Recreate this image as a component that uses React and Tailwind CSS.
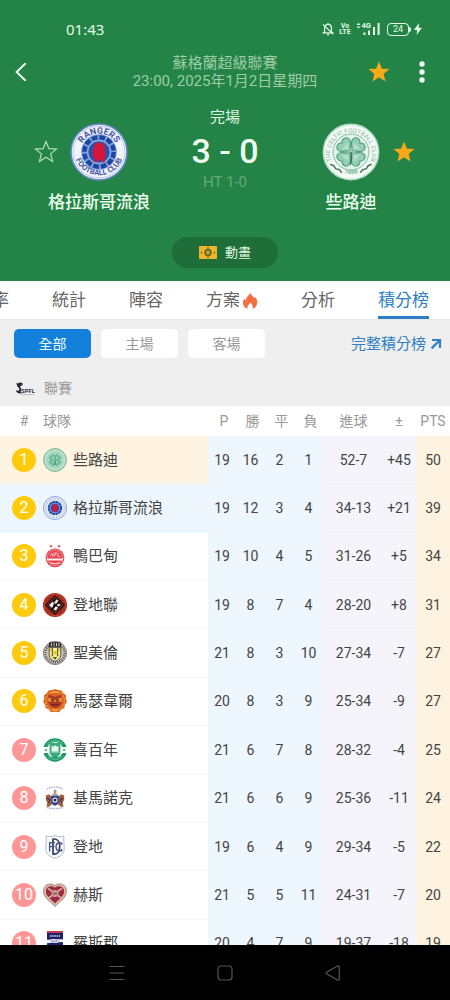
import React from "react";

const STAR =
  "M12 1.6l2.9 7.1 7.5.4-5.8 4.8 2 7.5L12 17.3l-6.6 4.1 2-7.5L1.6 9.1l7.5-.4z";

function Star({ filled }) {
  return (
    <svg viewBox="0 0 24 24" className="size-6" aria-hidden="true">
      <path
        d={STAR}
        fill={filled ? "#fca918" : "none"}
        stroke={filled ? "none" : "#b9dfb9"}
        strokeWidth="1.2"
      />
    </svg>
  );
}

function Rangers({ detailed, className }) {
  return (
    <svg viewBox="0 0 60 60" className={className} aria-hidden="true">
      <circle cx="30" cy="30" r="29" fill="#f0f3fa" stroke="#5f83bf" strokeWidth="1.6" />
      <circle cx="30" cy="30" r="26.8" fill="none" stroke="#a9bbe0" strokeWidth=".8" />
      {detailed ? (
        <>
          <path id="rfc-top" d="M10 31a20 20 0 0 1 40 0" fill="none" />
          <path id="rfc-bottom" d="M4 28a26 26 0 0 0 52 0" fill="none" />
          <text fill="#4a58a8" fontSize="9.2" fontWeight="700" fontFamily="Roboto, sans-serif" textAnchor="middle">
            <textPath href="#rfc-top" startOffset="50%">RANGERS</textPath>
          </text>
          <text fill="#4a58a8" fontSize="8" fontWeight="700" fontFamily="Roboto, sans-serif" textAnchor="middle">
            <textPath href="#rfc-bottom" startOffset="50%">FOOTBALL CLUB</textPath>
          </text>
        </>
      ) : (
        <circle cx="30" cy="30" r="23" fill="none" stroke="#a9b6df" strokeWidth="4" strokeDasharray="3 3" />
      )}
      <circle cx="30" cy="30" r="18.4" fill="#7c9dd8" />
      <circle cx="30" cy="30" r="15.2" fill="none" stroke="#1c45a0" strokeWidth="4.6" strokeDasharray="5.9 2.05" />
      <circle cx="30" cy="30" r="11.6" fill="#1f54b4" stroke="#a9c2ea" strokeWidth=".9" />
      <path
        d="M27 21l2-1.6 1.6 1.8 2.6-1 2.2 2-1 2.4 2.8-.6-.6 3.4-2 .8 3 1.4-1.2 3.4 1 3-2.2 1.6 1 2.4-3.4.8-1.2-3-2.4 1-1.2 1.8-3.4-.8 1.4-2.4-2.8-1 1.4-2-3-1.2 2.8-2-2.8-2 3-.8-1.800-2.800 3.200.4-1.600-2.800z"
        fill="#d5163c"
      />
    </svg>
  );
}

const LEAF =
  "M0-1.4C-2.2-4.6-8-6-8-10.8c0-4.4 5.6-5.8 8-2.2 2.4-3.6 8-2.2 8 2.2C8-6 2.2-4.6 0-1.4z";

function Celtic({ detailed, className }) {
  const leaf = detailed ? "#94ceb3" : "#6cc098";
  return (
    <svg viewBox="0 0 60 60" className={className} aria-hidden="true">
      <circle cx="30" cy="30" r="28.6" fill={detailed ? "#f3faf6" : "#a9d9c1"} stroke={detailed ? "#b6dcc8" : "#4a9f77"} strokeWidth="1.6" />
      {detailed ? (
        <>
          <path id="cfc-top" d="M9.400 38a21.600 21.600 0 1 1 41.200 0" fill="none" />
          <path id="cfc-bottom" d="M10 43a25.300 25.300 0 0 0 40 0" fill="none" />
          <text fill="#9cc5ae" fontSize="6.400" fontWeight="500" fontFamily="Roboto, sans-serif" textAnchor="middle">
            <textPath href="#cfc-top" startOffset="50%">THE CELTIC FOOTBALL CLUB</textPath>
          </text>
          <text fill="#7fb396" fontSize="6.400" fontWeight="700" fontFamily="Roboto, sans-serif" textAnchor="middle">
            <textPath href="#cfc-bottom" startOffset="50%">1888</textPath>
          </text>
          <path d="M8.600 42.600l3.600 1.600 1.800 3 4 1.200 2.400 3M51.400 42.600l-3.600 1.600-1.800 3-4 1.200-2.400 3" fill="none" stroke="#4b7a64" strokeWidth="1.600" />
        </>
      ) : (
        <circle cx="30" cy="30" r="23.500" fill="none" stroke="#d3ecdf" strokeWidth="4" strokeDasharray="2.600 2.600" />
      )}
      <circle cx="30" cy="30" r="18.600" fill={detailed ? "#e0f2e9" : "#b9e2cf"} stroke="#7dbc9e" strokeWidth="1" />
      {[45, 135, 225, 315].map((a) => (
        <g key={a} transform={"translate(30 30) rotate(" + a + ")"}>
          <path d={LEAF} fill={leaf} stroke="#4f9c7a" strokeWidth="1" />
          <path d="M0-3v-7M0-6l-3.600-3M0-6l3.600-3" fill="none" stroke="#d8efe3" strokeWidth=".9" />
        </g>
      ))}
      <path d="M30 30q1 7-.6 13" fill="none" stroke="#2f7555" strokeWidth="1.500" />
    </svg>
  );
}

function Crest({ children }) {
  return (
    <svg viewBox="0 0 24 24" className="size-6" aria-hidden="true">
      {children}
    </svg>
  );
}

const Aberdeen = () => (
  <Crest>
    <path d="M8 .4l.6 1.1 1.2.1-.9.9.2 1.2L8 3.1l-1.1.6.2-1.2-.9-.9 1.2-.1zM16 .4l.6 1.1 1.2.1-.9.9.2 1.2-1.1-.6-1.1.6.2-1.2-.9-.9 1.2-.1z" fill="#e4545c" />
    <circle cx="12" cy="13.8" r="9.4" fill="#e5404b" />
    <circle cx="12" cy="13.8" r="7.8" fill="none" stroke="#f5a3a7" strokeWidth=".8" />
    <path d="M7 12.500l2-3.500 1 3.500M11.200 12.500V9h3M11.200 10.800h2.400M17.500 12.500h-2.400V9" fill="none" stroke="#fbc9cb" strokeWidth=".9" />
    <path d="M3.600 14.400h16.800l-.6 2H4.200z" fill="#fdeeee" />
    <path d="M7.400 18.400c2.400 1.600 6.800 1.600 9.200 0" fill="none" stroke="#fbc9cb" strokeWidth="1.200" />
  </Crest>
);

const DundeeUnited = () => (
  <Crest>
    <circle cx="12" cy="12" r="12" fill="#a52b1c" />
    <circle cx="12" cy="12" r="10.800" fill="none" stroke="#c9422a" strokeWidth=".9" />
    <path d="M12 2l10 10-10 10L2 12z" fill="#1c1110" />
    <path d="M12 4.200L19.800 12 12 19.800 4.200 12z" fill="#241615" stroke="#a9402c" strokeWidth=".8" />
    <path d="M6 12l4-3.600 1 2.400L9 15zM13.400 6.600l2 1.200-1 2.400 3.600 1.800-2.800 1.400-2-2.200-2-1.400zM12.600 13l2.400 1.600-2 3-2.600-1z" fill="#f6efe9" />
    <path d="M8 17.600L17.400 7" stroke="#120c0c" strokeWidth="1.400" />
  </Crest>
);

const StMirren = () => (
  <Crest>
    <circle cx="12" cy="12" r="11.600" fill="#c9c7c2" stroke="#6d6b66" strokeWidth=".8" />
    <circle cx="12" cy="12" r="9.600" fill="none" stroke="#6a6862" strokeWidth="2.400" strokeDasharray="1.300 1" />
    <path d="M6.400 1.200h11.200l.8 4.600H5.600z" fill="#27241f" />
    <path d="M8.400 2v3M11 2v3M13.600 2v3M16 2v3" stroke="#dcdad4" strokeWidth="1" />
    <path d="M6.200 6.400h11.600v8c0 3-3 5-5.800 6-2.800-1-5.800-3-5.800-6z" fill="#f5ecb0" stroke="#37342b" strokeWidth=".8" />
    <path d="M7 7.200h3v3H7zM14 7.200h3v3h-3zM10.200 10h3.600v3.400h-3.600zM7.400 13.400h2.800v2.800H8.400zM13.800 13.400h2.800l-1 2.800h-1.800z" fill="#e5cb1d" />
    <path d="M9.400 7v8M14.600 7v8" stroke="#4b473c" strokeWidth=".9" />
    <path d="M9.800 16.200h4.400l-2.200 2.400z" fill="#312e28" />
  </Crest>
);

const Motherwell = () => (
  <Crest>
    <path d="M12 0l3 1 3.400.4 1.800 2.800 2.800 2-.2 3.400 1.200 3.200-2 2.800-.6 3.400-3.200 1.400L16 23.200l-4-.4-4 .4-2.200-2.800-3.200-1.400L2 15.600l-2-2.800 1.200-3.200L1 6.200l2.800-2L5.600 1.400 9 1z" fill="#dd6422" />
    <circle cx="12" cy="12" r="9.600" fill="none" stroke="#ee9a38" strokeWidth="1.200" strokeDasharray="2 1" />
    <path d="M5.400 5.600L12 8l6.600-2.400v7.400c0 3-3.400 5.400-6.600 6-3.200-.6-6.600-3-6.600-6z" fill="#a8382a" />
    <path d="M5.400 8.600L12 11l6.600-2.400v4H5.400z" fill="#f2a62c" />
    <path d="M8 10.200l1.600 2 1.400-2M16 10.200l-1.600 2-1.400-2M8 15.600h8" stroke="#7d1f22" strokeWidth="1.200" fill="none" />
    <path d="M8.400 3.400h7.200M9 20.800h6" stroke="#f3b24a" strokeWidth="1" />
  </Crest>
);

const Hibernian = () => (
  <Crest>
    <circle cx="12" cy="12" r="11.800" fill="#1e9b6a" />
    <path d="M0 9h24v6H0z" fill="#fff" />
    <circle cx="12" cy="12" r="8" fill="#f4fbf8" />
    <path d="M6.600 5h10.800v9.400c0 2.600-3 4.400-5.400 5.200-2.400-.8-5.400-2.600-5.400-5.200z" fill="#3aa97d" />
    <path d="M9 13V8l1.400 1.200L12 7.400l1.600 1.800L15 8v5zM7.600 14h8.800" fill="#e9f7f0" stroke="#e9f7f0" strokeWidth=".8" />
    <path d="M9 20.400c0-2 6-2 6 0M1.800 12h2M20.200 12h2" stroke="#1e9b6a" strokeWidth="1.500" fill="none" />
    <path d="M4.400 6.200a10 10 0 0 1 15.200 0M4.600 18a10 10 0 0 0 14.800 0" fill="none" stroke="#a5dcc5" strokeWidth=".9" strokeDasharray="1.400 .8" />
  </Crest>
);

const Kilmarnock = () => (
  <Crest>
    <path d="M4 3.200C8 .4 16 .4 20 3.200" fill="none" stroke="#a3b4cc" strokeWidth="1.300" strokeDasharray="1.600 .7" />
    <path d="M10.600 4.400l1.400-1.200 1.600 1.200-.4 3 2 1.600H8.800l2-1.600z" fill="#b9978b" />
    <path d="M2.800 9.400l3-1.200 3 2.600v8l-3 2H3.400l1-4-1.600-3zM21.200 9.400l-3-1.200-3 2.600v8l3 2h2.400l-1-4 1.600-3z" fill="#a2603f" />
    <path d="M4 12l3 2-2 3M20 12l-3 2 2 3" stroke="#4c3346" strokeWidth="1.100" fill="none" />
    <path d="M8.200 9.600h7.600v6.200c0 2.200-2 3.400-3.800 4-1.800-.6-3.800-1.800-3.800-4z" fill="#27438f" />
    <circle cx="12" cy="14" r="2.600" fill="#f5f5f5" />
    <path d="M10.800 12.800h2.400l.4 1.800L12 15.800l-1.600-1.200z" fill="#20233a" />
    <path d="M4 21.200c4 1.800 12 1.800 16 0" fill="none" stroke="#a3b4cc" strokeWidth="1.500" strokeDasharray="1.600 .7" />
  </Crest>
);

const Dundee = () => (
  <Crest>
    <path d="M3 1c3 1 6 .8 9-.4 3 1.200 6 1.400 9 .4-.8 4 .4 9 .2 13.600C21 19.400 16.600 22 12 23.200 7.400 22 3 19.400 2.800 14.600 2.600 10 3.800 5 3 1z" fill="#f8f9fc" stroke="#a7b1c8" strokeWidth=".9" />
    <path d="M10 3.400v16.400M10 4h1.600c6.800 0 6.800 15.200 0 15.200H10" fill="none" stroke="#2f3c66" strokeWidth="1.700" />
    <path d="M6.600 7.400v9.200M6 7.600h6M6.600 11.600h5M18.600 9.200c-1.200-2.600-5.600-2-5.600 2.600s4.400 5.200 5.600 2.600M18.600 7.400v2.400M18.600 14v2.400" fill="none" stroke="#46537e" strokeWidth="1.300" />
  </Crest>
);

const Hearts = () => (
  <Crest>
    <path d="M12 2.600C9.600.4 4.600.2 2 3.400-.6 6.800.4 12 3.600 15.600 6 18.400 9.400 20.400 12 23.400c2.600-3 6-5 8.400-7.800C23.600 12 24.600 6.800 22 3.400 19.400.2 14.400.4 12 2.600z" fill="#d9b7a0" stroke="#8d6a63" strokeWidth=".7" />
    <path d="M12 4.800C9.600 2.800 6 2.800 4 5c-2 2.600-1 6.400 1.400 9.200C7.400 16.400 10 18 12 20.400c2-2.400 4.600-4 6.600-6.200C21 11.400 22 7.600 20 5c-2-2.200-5.600-2.200-8-.2z" fill="#9c2a44" />
    <path d="M5 5.400l14 10M19 5.400l-14 10" stroke="#ddbcae" strokeWidth="1.500" />
    <circle cx="12" cy="10.500" r="3.500" fill="#cda08b" />
    <path d="M10 9.400l4 2.400M14 9.400l-4 2.400" stroke="#73506a" strokeWidth=".9" />
  </Crest>
);

const RossCounty = () => (
  <Crest>
    <path d="M4 0h16v14c0 5-4 8-8 10-4-2-8-5-8-10z" fill="#1f2366" />
    <path d="M4 0h16v2H4z" fill="#c33a56" />
    <path d="M7 5h10" stroke="#aab0db" strokeWidth="1.800" strokeDasharray="1.400 .8" />
    <path d="M4 8.400c3 .8 5-.8 8-.2 3 .4 5-.4 8 .2v3c-4-1-5 1-8 .6-3-.6-5-.4-8 .2z" fill="#eceef8" />
    <path d="M8 9.200l1.400 1.600L11 9.400l1.400 1.400L14 9.400l1.400 1.400" stroke="#5a5f9b" strokeWidth=".9" fill="none" />
    <path d="M4.400 17h15.200l-2 3H6.400z" fill="#c33a56" />
  </Crest>
);

const TEAMS = [
  ["些路迪", () => <Celtic className="size-6" />, 19, 16, 2, 1, "52-7", "+45", 50],
  ["格拉斯哥流浪", () => <Rangers className="size-6" />, 19, 12, 3, 4, "34-13", "+21", 39],
  ["鴨巴甸", Aberdeen, 19, 10, 4, 5, "31-26", "+5", 34],
  ["登地聯", DundeeUnited, 19, 8, 7, 4, "28-20", "+8", 31],
  ["聖美倫", StMirren, 21, 8, 3, 10, "27-34", "-7", 27],
  ["馬瑟韋爾", Motherwell, 20, 8, 3, 9, "25-34", "-9", 27],
  ["喜百年", Hibernian, 21, 6, 7, 8, "28-32", "-4", 25],
  ["基馬諾克", Kilmarnock, 21, 6, 6, 9, "25-36", "-11", 24],
  ["登地", Dundee, 19, 6, 4, 9, "29-34", "-5", 22],
  ["赫斯", Hearts, 21, 5, 5, 11, "24-31", "-7", 20],
  ["羅斯郡", RossCounty, 20, 4, 7, 9, "19-37", "-18", 19],
];

function StatusBar() {
  return (
    <div className="flex h-6 items-center justify-between pr-7 pl-[66px] text-[#e3fbe3]">
      <span className="font-['Noto_Sans',sans-serif] text-[15px] leading-6">01:43</span>
      <div className="flex items-center gap-[6px]">
        <svg viewBox="0 0 12 14" className="h-[14px] w-3" fill="none" stroke="currentColor" strokeWidth="1.200" aria-hidden="true">
          <path d="M2.600 9.800V6c0-2.200 1.400-3.600 3.400-3.600S9.400 3.800 9.400 6v3.800l1.200 1H1.400z" />
          <path d="M6 1v1.400M5 12.600h2M1 2.400l10 9.600" />
        </svg>
        <div className="flex w-[10px] flex-col items-center font-[Roboto,sans-serif] text-[7px] leading-[6px] font-bold">
          <span>Vo</span>
          <span>LTE</span>
        </div>
        <svg viewBox="0 0 25 14" className="h-[14px] w-[25px]" fill="currentColor" aria-hidden="true">
          <path d="M2.500.8l2 2.200h-4zM2.500 6.600l-2-2.200h4z" />
          <text x="5.500" y="6.400" fontSize="7.500" fontWeight="700" fontFamily="Roboto, sans-serif">4G</text>
          <path d="M7.400 10.600h2V13h-2zM12 8.600h2V13h-2zM17 5h2v8h-2zM21.600 1h2v12h-2z" />
        </svg>
        <div className="flex items-center gap-[3px]">
          <span className="flex items-center">
            <span className="flex h-[13px] w-[22px] items-center justify-center rounded-[4px] border border-current font-[Roboto,sans-serif] text-[9px] leading-none">24</span>
            <span className="h-[5px] w-[2px] rounded-r-sm bg-current" />
          </span>
          <svg viewBox="0 0 8 12" className="h-3 w-2" fill="currentColor" aria-hidden="true">
            <path d="M5 0L0 7h3.200L2.600 12 8 4.800H4.600z" />
          </svg>
        </div>
      </div>
    </div>
  );
}

function Side({ name, favourite, children }) {
  const star = (
    <button type="button" aria-label={"收藏 " + name} className="w-6">
      <Star filled={favourite} />
    </button>
  );
  const spacer = <span className="w-6" />;
  return (
    <div className="flex w-[132px] flex-col items-center gap-[9px] pt-4">
      <div className="flex items-center gap-3">
        {favourite ? spacer : star}
        {children}
        {favourite ? star : spacer}
      </div>
      <p className="text-[17px] leading-6 font-medium whitespace-nowrap text-[#ecffec]">{name}</p>
    </div>
  );
}

function MatchHeader() {
  return (
    <header className="shrink-0 bg-[#248448] pt-[17px] pb-[13px]">
      <StatusBar />
      <div className="mt-[13px] flex h-9 items-center justify-between">
        <button type="button" aria-label="返回" className="flex w-[90px] pl-[14px]">
          <svg viewBox="0 0 14 20" className="h-5 w-[14px]" fill="none" stroke="#e9ffe9" strokeWidth="2" aria-hidden="true">
            <path d="M11.600 1.200L2.600 10l9 8.800" />
          </svg>
        </button>
        <div className="text-center text-[15px] leading-[18px] whitespace-nowrap text-[#9dcca6]">
          <h1>蘇格蘭超級聯賽</h1>
          <p>23:00, 2025年1月2日星期四</p>
        </div>
        <div className="flex w-[90px] items-center justify-end gap-[23px] pr-5">
          <button type="button" aria-label="收藏賽事">
            <Star filled />
          </button>
          <button type="button" aria-label="更多">
            <svg viewBox="0 0 16 24" className="h-6 w-4" fill="#f1fff1" aria-hidden="true">
              <circle cx="8" cy="4" r="2.700" />
              <circle cx="8" cy="12" r="2.700" />
              <circle cx="8" cy="20" r="2.700" />
            </svg>
          </button>
        </div>
      </div>

      <div className="mt-[17px] flex justify-between px-[33px]">
        <Side name="格拉斯哥流浪">
          <Rangers detailed className="size-[58px]" />
        </Side>
        <div className="flex flex-col items-center whitespace-nowrap">
          <p className="text-[15px] leading-5 text-[#e2f7e2]">完場</p>
          <p className="mt-[6px] text-[34px] leading-9 font-medium text-[#f1fff1]">3 - 0</p>
          <p className="mt-1 text-[15px] leading-[18px] text-[#64a979]">HT 1-0</p>
        </div>
        <Side name="些路迪" favourite>
          <Celtic detailed className="size-[58px]" />
        </Side>
      </div>

      <div className="mt-[23px] flex justify-center">
        <button type="button" className="flex h-[31px] w-[106px] items-center justify-center gap-2 rounded-full bg-[#1f6e39] text-[13px] text-[#e2f7e2]">
          <svg viewBox="0 0 18 13" className="h-[13px] w-[18px]" aria-hidden="true">
            <rect width="18" height="13" rx="1" fill="#f3b32b" />
            <path d="M9 .6v11.800" stroke="#4c6a22" strokeWidth="1" />
            <circle cx="9" cy="6.500" r="3" fill="#c99a2a" stroke="#4c6a22" strokeWidth="1.500" />
            <path d="M2 5l1.400 1.500L2 8zM16 5l-1.400 1.500L16 8z" fill="#4c6a22" />
          </svg>
          動畫
        </button>
      </div>
    </header>
  );
}

function Flame() {
  return (
    <svg viewBox="0 0 16 18" className="h-[18px] w-4" aria-hidden="true">
      <path d="M8.400.8c.6 2.800 3 3.600 4 5.600.4-.6.4-1.400.2-2 2.400 2 3.200 5 2.400 7.800-.8 2.600-2.600 4.200-4.800 4.600 1.200-2.200.2-4.400-2.200-6.400-.2 1.600-2.600 2.800-2.600 4.600 0 .8.200 1.400.4 1.800C2.800 16 .8 13.800 1 10.800 1 8.800 2 7.400 2.800 6.400c.2 1 .6 1.600 1.200 2C4.200 5 6.800 3.600 8.400.8z" fill="#f46e42" />
    </svg>
  );
}

const TABS = ["賠率", "統計", "陣容", "方案", "分析", "積分榜"];

function Tabs() {
  return (
    <nav className="flex h-[39px] shrink-0 justify-end gap-[43px] overflow-hidden border-b border-[#e8e8e8] bg-white pr-[21px]">
      {TABS.map((t) => (
        <a
          key={t}
          href="#"
          aria-current={t === "積分榜" ? "page" : undefined}
          className={
            "flex shrink-0 items-center gap-[2px] border-b-[3px] pt-[5px] text-[17px] whitespace-nowrap " +
            (t === "積分榜" ? "border-b-[#2c7fc4] text-[#2c7fc4]" : "border-b-transparent text-[#666]")
          }
        >
          {t}
          {t === "方案" && <Flame />}
        </a>
      ))}
    </nav>
  );
}

function Filters() {
  return (
    <div className="flex items-center justify-between pt-[9px] pr-2 pl-[14px]">
      <div className="flex gap-[10px]">
        {["全部", "主場", "客場"].map((f, i) => (
          <button
            key={f}
            type="button"
            className={
              "h-[29px] w-[77px] rounded-[5px] pt-px text-[14px] " +
              (i === 0 ? "bg-[#1380dc] text-[#eaffff]" : "bg-white text-[#999]")
            }
          >
            {f}
          </button>
        ))}
      </div>
      <a href="#" className="flex items-center gap-1 pt-px text-[15px] whitespace-nowrap text-[#3181c4]">
        完整積分榜
        <svg viewBox="0 0 12 12" className="size-3" fill="none" stroke="currentColor" strokeWidth="2.200" aria-hidden="true">
          <path d="M2 2h8v8M10 2L1.600 10.400" />
        </svg>
      </a>
    </div>
  );
}

function League() {
  return (
    <div className="flex h-12 items-end gap-[9px] pb-[6px] pl-[15px]">
      <svg viewBox="0 0 20 14" className="mb-1 h-[14px] w-5" aria-hidden="true">
        <path d="M7.600 1.200C5-.2 1.600 1 2 3.400c.2 1.800 2.600 2.200 2.400 4C4.200 9 1.600 9 .8 8c.4 2.600 3 4 6 3.200L5.400 9.800c1.600-1.800.8-3.400-.2-4.800-.8-1.400.6-2.800 2.400-2.200z" fill="#26263a" />
        <path d="M1 1.400l1.600 1.400M5 4l2.400-1.200" stroke="#26263a" strokeWidth="1" />
        <text x="6" y="10.500" fontSize="6" fontWeight="700" fontFamily="Roboto, sans-serif" fill="#33334a">SPFL</text>
        <path d="M6 12.600h13" stroke="#9a9aa8" strokeWidth=".6" />
      </svg>
      <h2 className="text-[14px] leading-6 text-[#999]">聯賽</h2>
    </div>
  );
}

function Standings() {
  return (
    <table className="h-[562px] w-full table-fixed border-separate border-spacing-0 text-center text-[14px] text-[#444]">
      <colgroup>
        <col className="w-12" />
        <col />
        <col className="w-7" />
        <col className="w-[29px]" />
        <col className="w-[29px]" />
        <col className="w-[29px]" />
        <col className="w-[59px]" />
        <col className="w-[34px]" />
        <col className="w-[34px]" />
      </colgroup>
      <thead>
        <tr className="h-[30px] bg-white text-[#999]">
          <th className="font-normal">#</th>
          <th className="text-left font-normal"><span className="-ml-[5px] block">球隊</span></th>
          <th className="pl-1 font-normal">P</th>
          <th className="pl-1 font-normal">勝</th>
          <th className="pl-1 font-normal">平</th>
          <th className="pl-1 font-normal">負</th>
          <th className="pl-[2px] font-normal">進球</th>
          <th className="font-normal">±</th>
          <th className="font-normal">PTS</th>
        </tr>
      </thead>
      <tbody>
        {TEAMS.map(([name, Badge, p, w, d, l, goals, diff, pts], i) => {
          const tint =
            i === 0
              ? "border-b border-[#fef4e1] bg-[#fef4e1]"
              : i === 1
                ? "border-b border-[#eef6fd] bg-[#eef6fd]"
                : "border-b border-[#f6f6f6] bg-white";
          const blue = "border-b border-[#eef6fe] bg-[#eef6fe] pt-px";
          const lilac = "border-b border-[#f1f1f5] bg-[#f5f4fa] pt-px";
          return (
            <tr key={name}>
              <td className={tint}>
                <span
                  className={
                    "mx-auto flex size-6 items-center justify-center rounded-full text-[16px] leading-none text-white " +
                    (i < 6 ? "bg-[#fecb0c]" : "bg-[#fd9797]")
                  }
                >
                  {i + 1}
                </span>
              </td>
              <th className={"text-left font-normal " + tint}>
                <span className="-ml-[5px] flex items-center gap-[6px] text-[15px] leading-6 whitespace-nowrap">
                  <Badge />
                  {name}
                </span>
              </th>
              <td className={blue}>{p}</td>
              <td className={blue}>{w}</td>
              <td className={blue}>{d}</td>
              <td className={blue}>{l}</td>
              <td className={"border-l-2 border-l-[#f5f5f8] " + lilac}>{goals}</td>
              <td className={lilac}>{diff}</td>
              <td className="border-b border-[#fef3e0] bg-[#fef3e0] pt-px">{pts}</td>
            </tr>
          );
        })}
      </tbody>
    </table>
  );
}

function NavBar() {
  return (
    <nav className="flex h-[55px] shrink-0 items-center justify-center gap-[90px] bg-black text-[#555]">
      <button type="button" aria-label="最近使用">
        <svg viewBox="0 0 18 18" className="size-[18px]" fill="none" stroke="currentColor" strokeWidth="1.200" aria-hidden="true">
          <path d="M1.500 2.500h15M1.500 9h15M1.500 15.500h15" />
        </svg>
      </button>
      <button type="button" aria-label="主畫面">
        <svg viewBox="0 0 18 18" className="size-[18px]" fill="none" stroke="currentColor" strokeWidth="1.200" aria-hidden="true">
          <rect x="2" y="2" width="14" height="14" rx="3" />
        </svg>
      </button>
      <button type="button" aria-label="返回上一頁">
        <svg viewBox="0 0 18 18" className="size-[18px]" fill="none" stroke="currentColor" strokeWidth="1.200" strokeLinejoin="round" aria-hidden="true">
          <path d="M2.600 8.200L13.600 2q1.600-.6 1.600 1v12q0 1.600-1.600 1L2.600 9.800q-1-.8 0-1.600z" />
        </svg>
      </button>
    </nav>
  );
}

export default function App() {
  return (
    <div className="flex h-screen flex-col bg-white font-[Roboto,'Noto_Sans_CJK_TC',sans-serif]">
      <MatchHeader />
      <Tabs />
      <main className="min-h-0 flex-1 overflow-hidden">
        <section className="bg-[#efefef]">
          <Filters />
          <League />
        </section>
        <Standings />
      </main>
      <NavBar />
    </div>
  );
}
